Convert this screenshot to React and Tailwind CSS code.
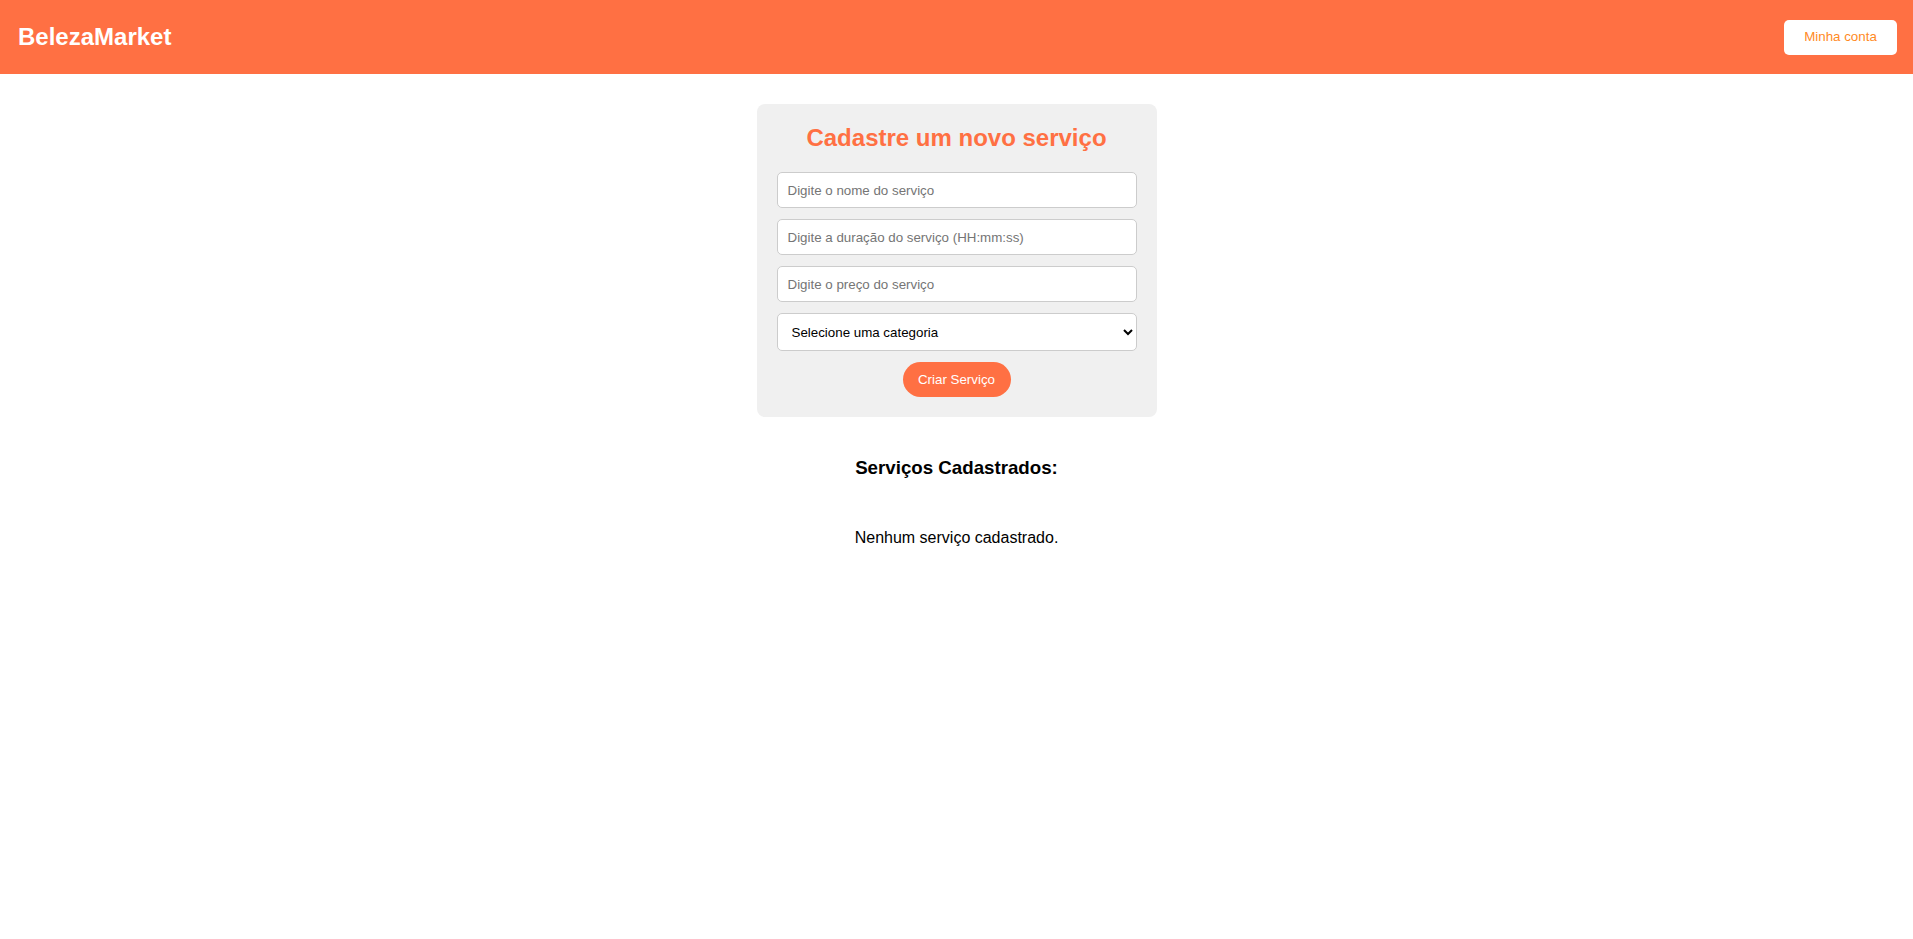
import React, { useState } from 'react';

const App = () => {
  const [nome, setNome] = useState('');
  const [duracao, setDuracao] = useState('');
  const [preco, setPreco] = useState('');
  const [categoria, setCategoria] = useState('');

  return (
    <div className="min-h-screen bg-white font-['Liberation_Sans',Arial,sans-serif] text-black">
      {/* Header */}
      <header className="h-[74px] bg-[#ff7043] flex items-center justify-between px-[18px] pr-4">
        <h1 className="text-[24px] font-bold text-white leading-none">BelezaMarket</h1>
        <button className="w-[113px] h-[35px] bg-white rounded-[5px] text-[13.33px] text-[#ff8a1f]">
          Minha conta
        </button>
      </header>

      <main className="flex flex-col items-center">
        {/* Form card */}
        <div className="mt-[30px] w-[400px] bg-[#f0f0f0] rounded-[8px] p-5 flex flex-col items-center">
          <h2 className="text-[24px] font-bold text-[#ff7043] leading-[28px] mb-5">
            Cadastre um novo serviço
          </h2>
          <form
            className="w-full flex flex-col items-center gap-[11px]"
            onSubmit={(e) => e.preventDefault()}
          >
            <input
              type="text"
              value={nome}
              onChange={(e) => setNome(e.target.value)}
              placeholder="Digite o nome do serviço"
              className="w-full h-[36px] px-[10px] bg-white border border-[#ccc] rounded-[5px] text-[13.33px] placeholder-[#757575] outline-none"
            />
            <input
              type="text"
              value={duracao}
              onChange={(e) => setDuracao(e.target.value)}
              placeholder="Digite a duração do serviço (HH:mm:ss)"
              className="w-full h-[36px] px-[10px] bg-white border border-[#ccc] rounded-[5px] text-[13.33px] placeholder-[#757575] outline-none"
            />
            <input
              type="text"
              value={preco}
              onChange={(e) => setPreco(e.target.value)}
              placeholder="Digite o preço do serviço"
              className="w-full h-[36px] px-[10px] bg-white border border-[#ccc] rounded-[5px] text-[13.33px] placeholder-[#757575] outline-none"
            />
            <select
              value={categoria}
              onChange={(e) => setCategoria(e.target.value)}
              className="w-full h-[38px] px-[10px] bg-white border border-[#ccc] rounded-[5px] text-[13.33px] text-black outline-none"
            >
              <option value="">Selecione uma categoria</option>
            </select>
            <button
              type="submit"
              className="w-[108px] h-[35px] rounded-full bg-[#ff7043] text-white text-[13.33px]"
            >
              Criar Serviço
            </button>
          </form>
        </div>

        {/* Listagem */}
        <h3 className="mt-[40px] text-[18.72px] font-bold leading-[21.5px]">Serviços Cadastrados:</h3>
        <p className="mt-[50px] text-[16px] leading-[18.4px]">Nenhum serviço cadastrado.</p>
      </main>
    </div>
  );
};

export default App;
